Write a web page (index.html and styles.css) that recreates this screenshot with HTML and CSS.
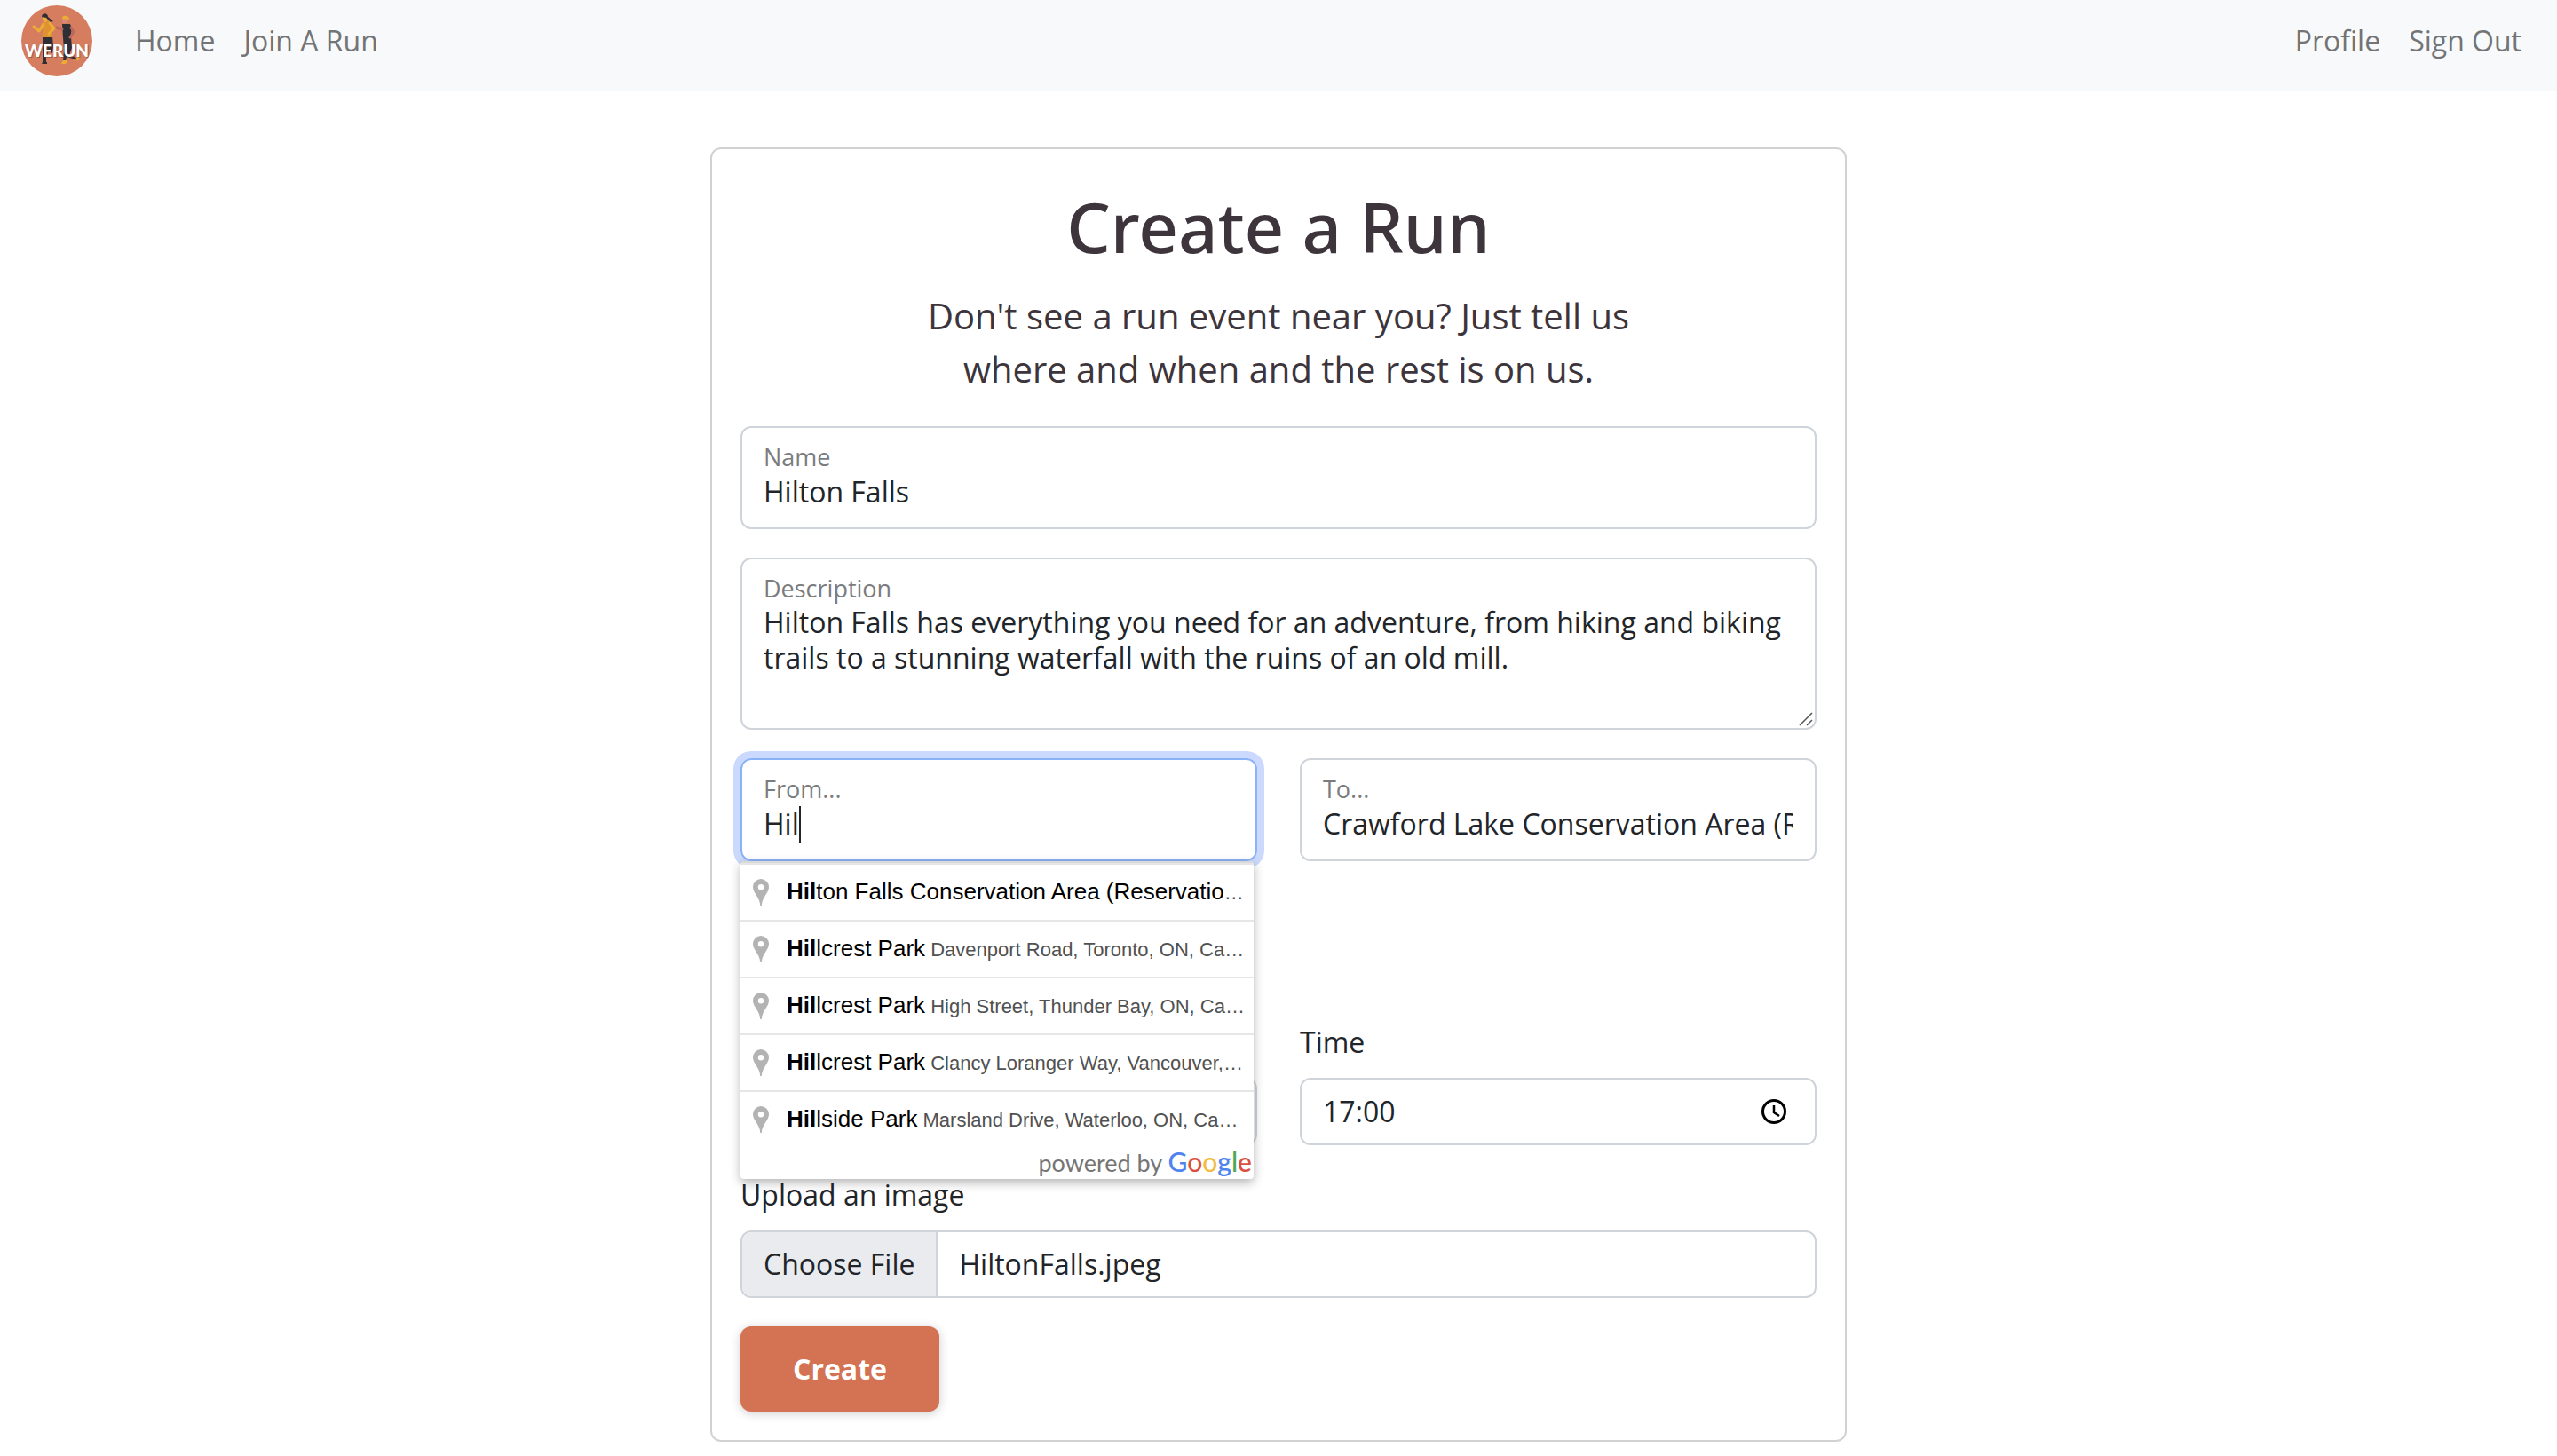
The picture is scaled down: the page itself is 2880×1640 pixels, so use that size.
FILE: index.html
```html
<!DOCTYPE html>
<html lang="en-CA">
<head>
<meta charset="utf-8">
<meta name="viewport" content="width=device-width, initial-scale=1">
<title>WeRun - Create a Run</title>
<link rel="stylesheet" href="styles.css">
</head>
<body>
<svg class="symbols" aria-hidden="true">
  <symbol id="pin" viewBox="0 0 18 30">
    <path fill="#b3b3b3" fill-rule="evenodd" d="M9 0a9 9 0 0 0-9 9c0 3 1.200 5 3 8 2.800 4.300 5 8 5.200 13h1.600c.2-5 2.400-8.700 5.200-13 1.800-3 3-5 3-8a9 9 0 0 0-9-9zm0 6a3.200 3.200 0 1 1 0 6.400A3.200 3.200 0 0 1 9 6z"/>
  </symbol>
</svg>

<nav class="navbar">
  <a class="brand" href="#" aria-label="WeRun">
    <svg viewBox="0 0 80 80" aria-hidden="true">
      <circle cx="40" cy="40" r="40" fill="#d67d60"/>
      <path d="M24 35h11l1 11-1 8-4-3-3 8v7h-4V50z" fill="#2f2e35"/>
      <path d="M24 64h5v2h-6zM47 36h9l1 12-3 8 8 3-1 2-10-3-1 5h-3l1-13z" fill="#2f2e35"/>
      <path d="M24 20l8-2 3 8v10H24z" fill="#df9330"/>
      <path d="M25 21l-5 8-6-5M32 20l5 6-6 6" fill="none" stroke="#ecac35" stroke-width="3" stroke-linejoin="round" stroke-linecap="round"/>
      <ellipse cx="27" cy="15" rx="3" ry="4" fill="#ecac35"/>
      <path d="M23 13c0-5 7-5 7 0l6 5-3 1-5-5z" fill="#2f2e35"/>
      <path d="M46 21h9l2 5-2 11h-8z" fill="#2f2e35"/>
      <path d="M46 27l-6-2M56 25l3 5-4 6" fill="none" stroke="#b9685a" stroke-width="3" stroke-linejoin="round" stroke-linecap="round"/>
      <ellipse cx="49" cy="16" rx="3" ry="4" fill="#d98b78"/>
      <path d="M46 15c-1-4 8-5 8 1z" fill="#ecac35"/>
      <path d="M47 62l5 0-2 4h-5zM62 60l3-4 1 4-3 3z" fill="#ecac35"/>
      <text x="41" y="59" class="brand-shade">WERUN</text>
      <text x="40" y="58" class="brand-word">WERUN</text>
    </svg>
  </a>
  <a class="nav-link" href="#">Home</a>
  <a class="nav-link" href="#">Join A Run</a>
  <a class="nav-link nav-end" href="#">Profile</a>
  <a class="nav-link" href="#">Sign Out</a>
</nav>

<main class="card">
  <h1 class="title">Create a Run</h1>
  <p class="lead">Don't see a run event near you? Just tell us where and when and the rest is on us.</p>

  <form class="form">
    <div class="field">
      <label for="name">Name</label>
      <input id="name" type="text" value="Hilton Falls">
    </div>

    <div class="field">
      <label for="description">Description</label>
      <textarea id="description" rows="3">Hilton Falls has everything you need for an adventure, from hiking and biking trails to a stunning waterfall with the ruins of an old mill.</textarea>
      <svg class="grip" viewBox="0 0 16 16" aria-hidden="true"><path d="M1 15L15 1M9 15l6-6" stroke="#555" stroke-width="1.500" fill="none"/></svg>
    </div>

    <div class="row">
      <div class="autocomplete">
        <div class="field focused">
          <label for="from">From...</label>
          <input id="from" type="text" value="Hil">
          <span class="caret"></span>
        </div>
        <div class="suggestions">
          <ul class="options">
            <li><svg><use href="#pin"/></svg><p><span><b>Hil</b>ton Falls Conservation Area (Reservation Required)</span></p></li>
            <li><svg><use href="#pin"/></svg><p><span><b>Hil</b>lcrest Park</span> Davenport Road, Toronto, ON, Canada</p></li>
            <li><svg><use href="#pin"/></svg><p><span><b>Hil</b>lcrest Park</span> High Street, Thunder Bay, ON, Canada</p></li>
            <li><svg><use href="#pin"/></svg><p><span><b>Hil</b>lcrest Park</span> Clancy Loranger Way, Vancouver, BC</p></li>
            <li><svg><use href="#pin"/></svg><p><span><b>Hil</b>lside Park</span> Marsland Drive, Waterloo, ON, Canada</p></li>
          </ul>
          <div class="credit">powered by <span class="google"><i class="blue">G</i><i class="red">o</i><i class="yellow">o</i><i class="blue">g</i><i class="green">l</i><i class="red">e</i></span></div>
        </div>
      </div>
      <div class="field">
        <label for="to">To...</label>
        <input id="to" type="text" value="Crawford Lake Conservation Area (Reservation Required)">
      </div>
    </div>

    <div class="row schedule">
      <input class="control" type="date" aria-label="Date">
      <div class="group">
        <label for="time">Time</label>
        <div class="control time">
          <input id="time" type="text" inputmode="numeric" value="17:00">
          <button type="button" aria-label="Pick a time">
            <svg viewBox="0 0 28 28" fill="none" stroke="#000"><circle cx="14" cy="14" r="12.500" stroke-width="3"/><path d="M14 7v8l6 4" stroke-width="2.500"/></svg>
          </button>
        </div>
      </div>
    </div>

    <div class="group">
      <label for="image">Upload an image</label>
      <input class="control file" id="image" type="file">
    </div>

    <button class="submit" type="submit">Create</button>
  </form>
</main>
<script src="script.js"></script>
</body>
</html>
```
FILE: script.js
```js
const picked = new DataTransfer();
picked.items.add(new File([""], "HiltonFalls.jpeg", { type: "image/jpeg" }));
document.getElementById("image").files = picked.files;
```
FILE: styles.css
```css
* { box-sizing: border-box; }

body {
  margin: 0;
  background: #fff;
  color: #212529;
  font: 32px/48px "Open Sans", "Noto Sans", sans-serif;
}

.symbols { display: none; }

.navbar {
  display: flex;
  align-items: center;
  padding: 6px 24px 16px;
  background: #f8f9fb;
}
.brand { display: flex; margin-right: 32px; }
.brand svg { width: 80px; height: 80px; }
.brand-word,
.brand-shade {
  fill: #fff;
  font: 900 19px Lato, sans-serif;
  text-anchor: middle;
}
.brand-shade { fill: #7a4436; opacity: 0.6; }
.nav-link { padding: 0 16px; color: #737475; text-decoration: none; }
.nav-end { margin-left: auto; }

.card {
  max-width: 1280px;
  margin: 64px auto 16px;
  padding: 32px;
  border: 2px solid #d2d2d2;
  border-radius: 12px;
}
.title {
  margin: 0 0 16px;
  color: #3d353b;
  font-family: "Noto Sans", sans-serif;
  font-size: 78px;
  font-weight: 500;
  line-height: 110px;
  text-align: center;
}
.lead {
  max-width: 880px;
  margin: 0 auto 34px;
  color: #3d353b;
  font-size: 40px;
  line-height: 60px;
  text-align: center;
}

.form { display: flex; flex-direction: column; gap: 32px; }
.row { display: grid; grid-template-columns: 1fr 1fr; align-items: end; gap: 48px; }
.schedule { margin-top: 148px; }

.field {
  position: relative;
  display: flex;
  flex-direction: column;
  min-width: 0;
  padding: 15px 24px 19px;
  border: 2px solid #ced4da;
  border-radius: 12px;
}
.field label { color: #7b7c7e; font-size: 27px; line-height: 36px; }
input,
textarea {
  margin: 0;
  padding: 0;
  border: 0;
  outline: 0;
  background: none;
  color: inherit;
  font: inherit;
}
.field input { width: 100%; height: 42px; }
.field textarea { width: 100%; line-height: 40px; resize: none; }
.grip { position: absolute; right: 2px; bottom: 2px; width: 16px; height: 16px; }
.focused { border-color: #8ab2f8; box-shadow: 0 0 0 8px #cad9fd; }
.caret { position: absolute; left: 64px; bottom: 18px; width: 2px; height: 42px; background: #212529; }

.autocomplete { position: relative; min-width: 0; }
.suggestions {
  position: absolute;
  z-index: 1;
  top: 100%;
  left: 0;
  right: 4px;
  border-top: 2px solid #d9d9d9;
  border-radius: 4px;
  background: #fff;
  box-shadow: 0 4px 12px rgba(0, 0, 0, 0.3);
  color: #515151;
  font: 22px/60px "Liberation Sans", Arial, sans-serif;
}
.options { margin: 0; padding: 0; list-style: none; }
.options li {
  display: flex;
  align-items: center;
  gap: 20px;
  height: 64px;
  padding: 0 10px 0 14px;
  border-top: 2px solid #e6e6e6;
}
.options svg { flex: none; width: 18px; height: 30px; }
.options p { margin: 0; overflow: hidden; text-overflow: ellipsis; white-space: nowrap; }
.options span { color: #000; font-size: 26px; }
.credit {
  height: 36px;
  padding-right: 2px;
  color: #757575;
  font: 27px/32px Lato, sans-serif;
  text-align: right;
}
.google { font-size: 30px; font-weight: 500; }
.google i { font-style: normal; }
.blue { color: #4f84ef; }
.red { color: #db4f40; }
.yellow { color: #f1bd42; }
.green { color: #4fa85a; }

.group { display: flex; flex-direction: column; gap: 16px; min-width: 0; }
.control {
  width: 100%;
  height: 76px;
  padding: 0 24px;
  border: 2px solid #ced4da;
  border-radius: 12px;
  background: #fff;
}
.time { display: flex; align-items: center; padding-right: 32px; }
.time input { flex: 1; min-width: 0; }
.time button { display: flex; padding: 0; border: 0; background: none; }
.time svg { width: 28px; height: 28px; }
.file { padding: 0; overflow: hidden; line-height: 72px; }
.file::file-selector-button {
  height: 72px;
  margin: 0 24px 0 0;
  padding: 0 24px;
  border: 0;
  border-right: 2px solid #ced4da;
  background: #e9ebef;
  color: inherit;
  font: inherit;
}

.submit {
  align-self: flex-start;
  width: 224px;
  height: 96px;
  border: 0;
  border-radius: 12px;
  background: #d47254;
  box-shadow: 0 2px 12px rgba(0, 0, 0, 0.2);
  color: #fff;
  font: inherit;
  font-weight: 700;
}
```
